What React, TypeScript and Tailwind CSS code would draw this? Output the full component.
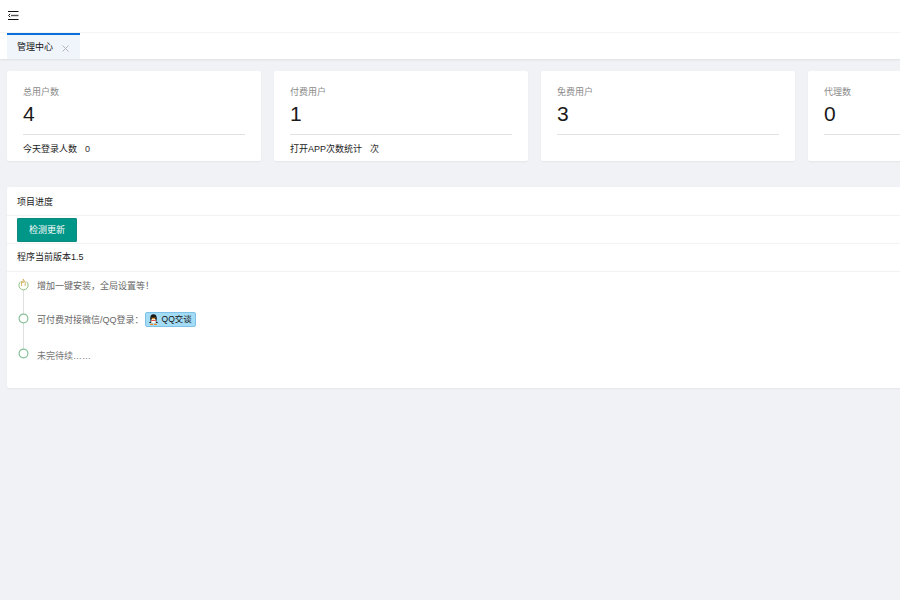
import React from "react";

const font = { fontFamily: '"Liberation Sans","Noto Sans CJK SC",sans-serif' };

function StatCard({ label, value, sub, subValue }: { label: string; value: string; sub?: string; subValue?: string }) {
  return (
    <div className="w-[254px] h-[90px] shrink-0 bg-white rounded-[2px] shadow-[0_1px_2px_rgba(0,0,0,0.05)] px-4 pt-[14px]">
      <div className="text-[9px] leading-[14px] text-[#8a8a8a]">{label}</div>
      <div className="text-[21px] leading-[26px] mt-[2px] text-[#1a1a1a] h-[33px]">{value}</div>
      <div className="border-t border-[#e2e2e2] h-[27px] flex items-center text-[9px] text-[#222] pt-[3px]">
        {sub && <span>{sub}</span>}
        {subValue !== undefined && <span className="ml-[8px] text-[#333]">{subValue}</span>}
      </div>
    </div>
  );
}

function Ring() {
  return (
    <svg width="11" height="11" viewBox="0 0 11 11" fill="#fff" stroke="#86c096" strokeWidth="1.2">
      <circle cx="5.5" cy="5.5" r="4.4" />
    </svg>
  );
}

function Flame() {
  return (
    <svg width="11" height="13" viewBox="0 0 11 13" fill="#fff" stroke="#8fbf7f" strokeWidth="1">
      <path d="M2.8 3.5A4.6 4.6 0 1 0 8.2 3.5" />
      <path d="M3.6 8V3L5.2 5V1L7.2 4.6V8" stroke="#d3b56c" fill="none" />
    </svg>
  );
}

function Penguin() {
  return (
    <svg width="11" height="13" viewBox="0 0 12 13" className="shrink-0">
      <ellipse cx="6" cy="5.5" rx="3.6" ry="4.8" fill="#1a1a1a" />
      <ellipse cx="6" cy="8" rx="2.6" ry="2.6" fill="#fff" />
      <path d="M3.2 4.6 H8.8 L6 6.4Z" fill="#f0a020" />
      <path d="M2.6 8.4 L1 10.4 L3.4 10.4Z M9.4 8.4 L11 10.4 L8.6 10.4Z" fill="#1a1a1a" />
      <path d="M2.4 11 H5.4 V12.4 H2.4Z M6.6 11 H9.6 V12.4 H6.6Z" fill="#e8831a" />
      <path d="M3.6 7 H8.4 V7.9 H3.6Z" fill="#d8261c" />
    </svg>
  );
}

export default function App() {
  return (
    <div className="w-[900px] h-[600px] overflow-hidden bg-[#f0f2f5] text-[9px]" style={font}>
      <div className="h-[33px] bg-white border-b border-[#f5f5f5] flex items-center pl-[8px]">
        <svg width="11" height="10" viewBox="0 0 11 10" fill="none" stroke="#111" strokeWidth="1">
          <path d="M0 0.5H10.5M0 8.5H10.5" />
          <path d="M3 4.5H10.5" stroke="#555" strokeWidth="1.4" />
          <path d="M2.2 2.8L0.6 4.5L2.2 6.2" />
        </svg>
      </div>
      <div className="h-[26px] bg-white flex shadow-[0_1px_2px_rgba(0,0,0,0.08)] pl-[7px]">
        <div className="w-[73px] h-[26px] bg-[#f0f5fc] border-t-2 border-[#0a6fd8] flex items-center pl-[10px] pt-[2px] text-[#111]">
          <span>管理中心</span>
          <svg className="ml-[9px]" width="7" height="7" viewBox="0 0 7 7" stroke="#b5b5b5" strokeWidth="1">
            <path d="M0.5 0.5L6.5 6.5M6.5 0.5L0.5 6.5" />
          </svg>
        </div>
      </div>
      <div className="pl-[7px] pt-[12px] w-[1100px]">
        <div className="flex gap-[13px]">
          <StatCard label="总用户数" value="4" sub="今天登录人数" subValue="0" />
          <StatCard label="付费用户" value="1" sub="打开APP次数统计" subValue="次" />
          <StatCard label="免费用户" value="3" />
          <StatCard label="代理数" value="0" />
        </div>
        <div className="mt-[26px] w-[1061px] h-[201px] bg-white rounded-[2px] shadow-[0_1px_2px_rgba(0,0,0,0.05)] text-[#333]">
          <div className="h-[29px] border-b border-[#f3f3f3] flex items-center pl-[10px] pt-[4px] text-[#222]">项目进度</div>
          <div className="h-[28px] border-b border-[#f3f3f3] flex items-center pl-[10px]">
            <button className="w-[60px] h-[24px] bg-[#009688] border border-[#0d8a7d] text-white text-[9px] pt-[2px] rounded-[1px]">检测更新</button>
          </div>
          <div className="h-[28px] border-b border-[#f3f3f3] flex items-center pl-[10px] text-[#222]">程序当前版本1.5</div>
          <div className="pl-[11px] pt-[6px] text-[#666]">
            <div className="relative flex flex-col">
              <div className="absolute left-[5px] top-[12px] h-[62px] w-px bg-[#e0e0e0]" />
              <div className="relative flex items-center h-[14px]">
                <div className="w-[11px] flex justify-center mb-[2px]"><Flame /></div>
                <span className="ml-[8px] mt-[4px]">增加一键安装，全局设置等！</span>
              </div>
              <div className="relative flex items-center h-[15px] mt-[20px]">
                <div className="w-[11px] flex justify-center mb-[3px]"><Ring /></div>
                <span className="ml-[8px] mt-[2px]">可付费对接微信/QQ登录：</span>
                <span className="ml-[1px] w-[51px] h-[15px] rounded-[2px] border border-[#7fc0e8] bg-[#a5dcf5] flex items-center pl-[2px] text-[#111] text-[8.5px] leading-none whitespace-nowrap">
                  <Penguin />
                  <span className="ml-[3px]">QQ交谈</span>
                </span>
              </div>
              <div className="relative flex items-center h-[14px] mt-[21px]">
                <div className="w-[11px] flex justify-center mb-[4px]"><Ring /></div>
                <span className="ml-[8px] mt-[4px] text-[#777]">未完待续……</span>
              </div>
            </div>
          </div>
        </div>
      </div>
    </div>
  );
}
